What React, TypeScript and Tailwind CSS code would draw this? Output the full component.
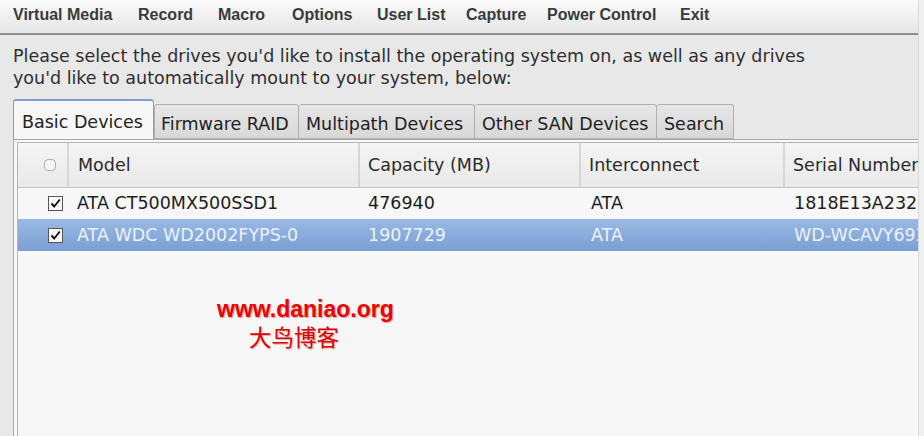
import React from "react";

const menu = [
  ["Virtual Media", "w-[125px]"],
  ["Record", "w-[80px]"],
  ["Macro", "w-[74px]"],
  ["Options", "w-[85px]"],
  ["User List", "w-[89px]"],
  ["Capture", "w-[81px]"],
  ["Power Control", "w-[133px]"],
  ["Exit", "w-[60px]"],
];

function Check() {
  return (
    <div className="w-[15px] h-[15px] border border-[#555] bg-white flex items-center justify-center">
      <svg width="13" height="13" viewBox="0 0 13 13">
        <path d="M2.5 6.5 L5.2 9.5 L10.8 2.5" fill="none" stroke="#111" strokeWidth="2" />
      </svg>
    </div>
  );
}

export default function App() {
  const font = { fontFamily: '"DejaVu Sans", sans-serif' };
  return (
    <div className="relative w-[924px] h-[436px] overflow-hidden bg-[#e8e8e8] flex flex-col">
      {/* menu bar */}
      <div
        className="h-[35px] shrink-0 flex items-center pl-[13px] pb-[3px] bg-gradient-to-b from-[#fafafa] to-[#e6e6e6] border-b-2 border-[#8e8e8e] text-[16px] font-bold text-[#3a3a3a]"
        style={{ fontFamily: '"Liberation Sans", Arial, sans-serif' }}
      >
        {menu.map(([t, w]) => (
          <span key={t} className={w}>{t}</span>
        ))}
      </div>

      <div className="flex-1 flex flex-col pl-[13px] pr-[6px]" style={font}>
        <p className="pt-[10px] text-[17.5px] leading-[22px] text-[#2e2e2e] whitespace-nowrap">
          Please select the drives you'd like to install the operating system on, as well as any drives
          <br />
          you'd like to automatically mount to your system, below:
        </p>

        {/* tabs */}
        <div className="mt-[10px] flex items-end h-[40px] text-[17.5px] text-[#222] whitespace-nowrap">
          <div className="h-[40px] w-[141px] border border-b-0 border-[#9a9a9a] border-t-2 border-t-[#7c9fd0] rounded-t-[3px] bg-[#f7f7f7] pl-[8px] pt-[8px]">
            Basic Devices
          </div>
          <div className="h-[35px] w-[145px] border border-[#b0b0b0] rounded-t-[3px] bg-gradient-to-b from-[#e6e6e6] to-[#d8d8d8] pl-[6px] pt-[6px]">
            Firmware RAID
          </div>
          <div className="h-[35px] w-[176px] border border-[#b0b0b0] border-l-0 rounded-t-[3px] bg-gradient-to-b from-[#e6e6e6] to-[#d8d8d8] pl-[7px] pt-[6px]">
            Multipath Devices
          </div>
          <div className="h-[35px] w-[182px] border border-[#b0b0b0] border-l-0 rounded-t-[3px] bg-gradient-to-b from-[#e6e6e6] to-[#d8d8d8] pl-[7px] pt-[6px]">
            Other SAN Devices
          </div>
          <div className="h-[35px] w-[77px] border border-[#b0b0b0] border-l-0 rounded-t-[3px] bg-gradient-to-b from-[#e6e6e6] to-[#d8d8d8] pl-[7px] pt-[6px]">
            Search
          </div>
        </div>

        {/* panel */}
        <div className="flex-1 border-l border-t border-[#a8a8a8] bg-[#f7f7f7] pl-[3px] pt-[2px]">
          <div className="h-full border-l border-t border-[#b4b4b4] bg-[#f7f7f7] text-[17.5px]">
            {/* header */}
            <div className="h-[45px] flex items-stretch bg-gradient-to-b from-[#f4f4f4] to-[#e9e9e9] border-b border-[#c4c4c4] text-[#2a2a2a] whitespace-nowrap">
              <div className="w-[51px] flex items-center justify-center pl-[14px] border-r-2 border-[#d8d8d8]">
                <div className="w-[12px] h-[12px] rounded-[4px] border border-[#b0b0b0] bg-[#f4f4f4]" />
              </div>
              <div className="w-[291px] flex items-center pl-[9px] border-r-2 border-[#d6d6d6]">Model</div>
              <div className="w-[221px] flex items-center pl-[8px] border-r-2 border-[#d6d6d6]">Capacity (MB)</div>
              <div className="w-[204px] flex items-center pl-[8px] border-r-2 border-[#d6d6d6]">Interconnect</div>
              <div className="flex-1 flex items-center pl-[8px] overflow-hidden">Serial Number</div>
            </div>
            {/* row 1 */}
            <div className="h-[31px] flex items-center text-[#1e1e1e] whitespace-nowrap">
              <div className="w-[51px] flex justify-center pl-[24px]"><Check /></div>
              <div className="w-[293px] pl-[8px]">ATA CT500MX500SSD1</div>
              <div className="w-[223px] pl-[6px]">476940</div>
              <div className="w-[206px] pl-[6px]">ATA</div>
              <div className="flex-1 pl-[3px] overflow-hidden">1818E13A2328</div>
            </div>
            {/* row 2 */}
            <div className="h-[32px] flex items-center bg-gradient-to-b from-[#9ab9e3] to-[#7a9fd3] text-[#eaf2ff] whitespace-nowrap">
              <div className="w-[51px] flex justify-center pl-[24px]"><Check /></div>
              <div className="w-[293px] pl-[8px]">ATA WDC WD2002FYPS-0</div>
              <div className="w-[223px] pl-[6px]">1907729</div>
              <div className="w-[206px] pl-[6px]">ATA</div>
              <div className="flex-1 pl-[3px] overflow-hidden">WD-WCAVY692</div>
            </div>
          </div>
        </div>
      </div>

      {/* right edge strip */}
      <div className="absolute top-0 right-0 w-[6px] h-full bg-[#f0f0f0] border-l border-[#d8d8d8]" />

      {/* watermark */}
      <div className="absolute left-[217px] top-[296px] flex flex-col items-start">
        <div
          className="text-[23px] font-bold text-[#ee0000] leading-[27px]"
          style={{ fontFamily: '"Liberation Sans", Arial, sans-serif', textShadow: "1px 1px 1px rgba(120,0,0,0.35)" }}
        >
          www.daniao.org
        </div>
        <div
          className="ml-[32px] text-[22.5px] text-[#dd0000] leading-[27px]"
          style={{ fontFamily: '"Noto Sans CJK SC", sans-serif', textShadow: "1px 1px 1px rgba(120,0,0,0.3)" }}
        >
          大鸟博客
        </div>
      </div>
    </div>
  );
}
